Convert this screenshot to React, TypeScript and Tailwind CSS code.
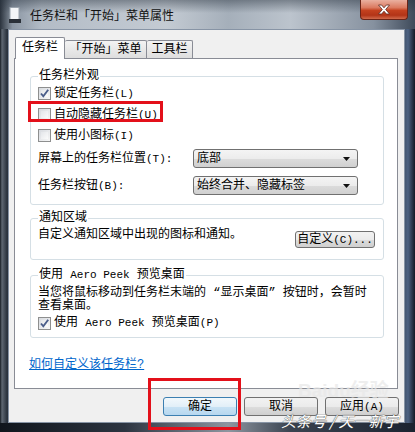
import React from "react";

// Latin bits render in a narrower mono size, like the SimSun half-width glyphs
function L({ children }: { children: React.ReactNode }) {
    return <span className="text-[11px]">{children}</span>;
}

function Check({ checked }: { checked?: boolean }) {
    return (
        <span className="relative flex h-[13px] w-[13px] shrink-0 items-center justify-center border border-[#8e8f8f] bg-[linear-gradient(135deg,#d8dbe0,#f7f7f7)]">
            <span className="absolute inset-[2px] bg-[linear-gradient(135deg,#e4e6ea,#fbfbfb)]" />
            {checked && (
                <svg viewBox="0 0 11 11" className="relative h-[11px] w-[11px]">
                    <path d="M2 5.5 L4.3 8.3 L9.2 1.8" fill="none" stroke="#4a5d8a" strokeWidth="1.9" />
                </svg>
            )}
        </span>
    );
}

function Combo({ text }: { text: string }) {
    return (
        <div className="flex h-[19px] w-[165px] items-center justify-between rounded-[3px] border border-[#707070] bg-[linear-gradient(180deg,#f4f4f4_0%,#ececec_50%,#dcdcdc_51%,#d0d0d0_100%)] pl-[3px] pr-[7px]">
            <span className="leading-[14px]">{text}</span>
            <svg viewBox="0 0 7 4" className="h-[4px] w-[7px]">
                <path d="M0 0 H7 L3.5 4 Z" fill="#111" />
            </svg>
        </div>
    );
}

function Button({ children, main }: { children: React.ReactNode; main?: boolean }) {
    return (
        <div
            className={
                main
                    ? "flex h-[19px] w-[74px] items-center justify-center rounded-[3px] border border-[#3c7fb1] bg-[linear-gradient(180deg,#f2f8fc_0%,#e2eff8_50%,#c8e2f4_51%,#b7d7ef_100%)]"
                    : "flex h-[19px] w-[74px] items-center justify-center rounded-[3px] border border-[#707070] bg-[linear-gradient(180deg,#f2f2f2_0%,#ebebeb_50%,#dddddd_51%,#cfcfcf_100%)]"
            }
        >
            <span className="whitespace-nowrap leading-[14px]">{children}</span>
        </div>
    );
}

export default function App() {
    return (
        <div className="relative flex h-[432px] w-[415px] flex-col overflow-hidden bg-[linear-gradient(90deg,#151b22_0px,#5e6772_2px,#2a323d_7px,#3a4654_400px,#4d6282_408px,#141b26_415px)] font-['Liberation_Mono','Noto_Sans_CJK_SC',monospace] text-[12px] text-black">
            {/* title bar */}
            <div className="flex h-[29px] shrink-0 items-center bg-[linear-gradient(180deg,rgba(40,50,62,0.45)_0%,rgba(40,50,62,0)_45%),linear-gradient(90deg,#2b333d_0%,#8b96a3_3%,#b3bcc6_10%,#c4cbd3_40%,#a5afba_55%,#bcc4cd_70%,#86919f_90%,#3e4a5a_100%)] pl-[9px]">
                <svg viewBox="0 0 12 16" className="h-[16px] w-[12px]">
                    <rect x="1" y="0.5" width="9" height="12" fill="#f4f6f8" stroke="#9aa3ad" />
                    <rect x="0" y="12" width="12" height="4" fill="#2a3038" />
                </svg>
                <span className="ml-[9px] font-['Noto_Sans_CJK_SC',sans-serif] text-[12px] leading-[16px] text-[#111]">
                    任务栏和「开始」菜单属性
                </span>
            </div>

            {/* client area */}
            <div className="ml-[8px] flex h-[394px] w-[397px] shrink-0 flex-col border border-[#8794a5] bg-[#f0f0f0] pl-[5px] pt-[7px]">
                <div className="relative z-10 ml-[1px] flex h-[22px] items-end">
                    <div className="flex h-[22px] w-[50px] items-center justify-center rounded-t-[2px] border border-b-0 border-[#898c95] bg-white pb-[1px] leading-[14px]">
                        任务栏
                    </div>
                    <div className="mb-[1px] flex h-[18px] w-[82px] items-center justify-center rounded-t-[2px] border border-b-0 border-l-0 border-[#898c95] bg-[linear-gradient(180deg,#f3f3f3,#dedede)] leading-[14px]">
                        「开始」菜单
                    </div>
                    <div className="mb-[1px] flex h-[18px] w-[46px] items-center justify-center rounded-t-[2px] border border-b-0 border-l-0 border-[#898c95] bg-[linear-gradient(180deg,#f3f3f3,#dedede)] leading-[14px]">
                        工具栏
                    </div>
                </div>

                <div className="-mt-[1px] flex h-[331px] w-[384px] flex-col border border-[#898c95] bg-white pl-[15px] pr-[13px] pt-[10px]">
                    <fieldset className="rounded-[3px] border border-[#d5dfe5] px-[7px] pb-[9px]">
                        <legend className="px-[1px] leading-[14px]">任务栏外观</legend>
                        <div className="flex h-[21px] items-center gap-[3px]">
                            <Check checked />
                            <span className="leading-[14px]">锁定任务栏<L>(L)</L></span>
                        </div>
                        <div className="flex h-[21px] items-center gap-[3px]">
                            <Check />
                            <span className="leading-[14px]">自动隐藏任务栏<L>(U)</L></span>
                        </div>
                        <div className="flex h-[21px] items-center gap-[3px]">
                            <Check />
                            <span className="leading-[14px]">使用小图标<L>(I)</L></span>
                        </div>
                        <div className="mt-[3px] flex h-[19px] items-center">
                            <span className="w-[155px] leading-[14px]">屏幕上的任务栏位置<L>(T):</L></span>
                            <Combo text="底部" />
                        </div>
                        <div className="mt-[8px] flex h-[19px] items-center">
                            <span className="w-[155px] leading-[14px]">任务栏按钮<L>(B):</L></span>
                            <Combo text="始终合并、隐藏标签" />
                        </div>
                    </fieldset>

                    <fieldset className="mt-[6px] rounded-[3px] border border-[#d5dfe5] px-[7px] pb-[11px]">
                        <legend className="px-[1px] leading-[14px]">通知区域</legend>
                        <div className="flex h-[23px] items-start justify-between">
                            <span className="mt-[2px] leading-[16px]">自定义通知区域中出现的图标和通知。</span>
                            <div className="mr-[1px] mt-[6px] flex h-[17px] w-[80px] items-center justify-center rounded-[3px] border border-[#707070] bg-[linear-gradient(180deg,#f2f2f2_0%,#ebebeb_50%,#dddddd_51%,#cfcfcf_100%)]">
                                <span className="whitespace-nowrap leading-[14px]">自定义<L>(C)...</L></span>
                            </div>
                        </div>
                    </fieldset>

                    <fieldset className="mt-[8px] rounded-[3px] border border-[#d5dfe5] px-[7px] pb-[6px]">
                        <legend className="px-[1px] leading-[14px]">使用 <L>Aero Peek</L> 预览桌面</legend>
                        <p className="mt-[5px] leading-[13px]">
                            当您将鼠标移动到任务栏末端的 “显示桌面” 按钮时，会暂时
                            <br />
                            查看桌面。
                        </p>
                        <div className="mt-[2px] flex h-[16px] items-center gap-[3px]">
                            <Check checked />
                            <span className="leading-[14px]">使用 <L>Aero Peek</L> 预览桌面<L>(P)</L></span>
                        </div>
                    </fieldset>

                    <span className="-ml-[1px] mt-[20px] leading-[14px] text-[#0066cc] underline">如何自定义该任务栏?</span>
                </div>

                <div className="mt-[8px] flex justify-end gap-[7px] pr-[5px]">
                    <Button main>确定</Button>
                    <Button>取消</Button>
                    <Button>应用<L>(A)</L></Button>
                </div>
            </div>

            <div className="h-[9px] shrink-0 bg-[linear-gradient(90deg,#10151c_0%,#2c3440_30%,#8e96a0_55%,#3a4350_70%,#1b2330_100%)]" />

            {/* close button */}
            <div className="absolute right-[7px] top-0 flex h-[20px] w-[48px] items-center justify-center rounded-b-[4px] border border-t-0 border-[#6b2417] bg-[linear-gradient(180deg,#eab0a0_0%,#db7a60_40%,#c4411f_55%,#b33417_80%,#d06a4c_100%)]">
                <svg viewBox="0 0 14 11" className="h-[11px] w-[14px]">
                    <path d="M1.5 1 L5.3 5.5 L1.5 10 H4.6 L7 7.2 L9.4 10 H12.5 L8.7 5.5 L12.5 1 H9.4 L7 3.8 L4.6 1 Z" fill="#fff" stroke="#5a2a22" strokeWidth="0.8" />
                </svg>
            </div>

            {/* red annotation boxes */}
            <div className="absolute left-[28px] top-[101px] h-[21px] w-[135px] border-[3px] border-[#e3101a]" />
            <div className="absolute left-[148px] top-[378px] h-[52px] w-[93px] border-[3px] border-[#e3101a]" />

            {/* watermarks */}
            <span className="absolute left-[298px] top-[381px] font-['Liberation_Sans','Noto_Sans_CJK_SC',sans-serif] text-[19px] font-bold leading-[20px] text-[#e8e8e8] opacity-70">
                Baidu经验
            </span>
            <span className="absolute left-[281px] top-[412px] font-['Noto_Sans_CJK_SC',sans-serif] text-[15px] italic leading-[17px] text-white [text-shadow:0_0_1px_#444,0_0_1px_#444]">
                头条号 / 天一新宇
            </span>
        </div>
    );
}
